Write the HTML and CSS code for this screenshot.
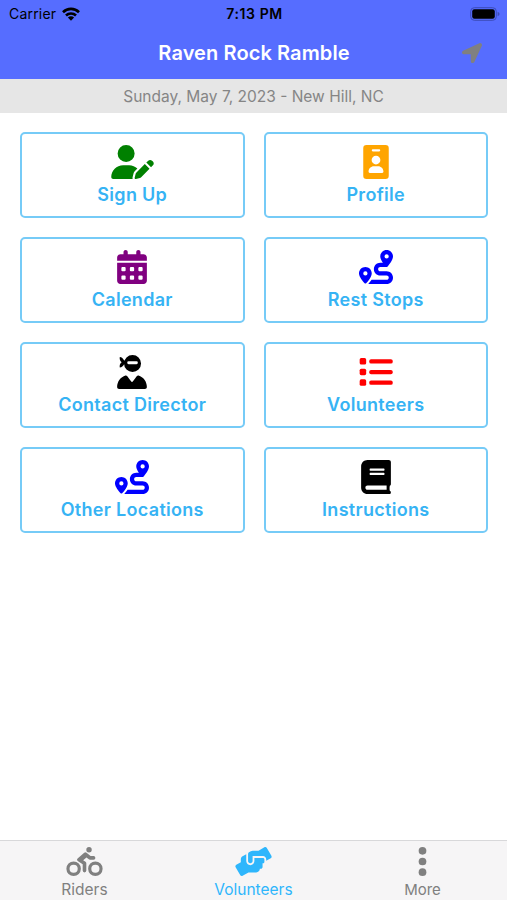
FILE: index.html
```html
<!DOCTYPE html>
<html lang="en">
<head>
<meta charset="utf-8">
<title>Raven Rock Ramble</title>
<link rel="stylesheet" href="styles.css">
</head>
<body>
<svg class="defs" aria-hidden="true">
  <symbol id="route" viewBox="0 0 512 512"><path fill-rule="evenodd" d="M512 96c0 50.2-59.1 125.1-84.6 155c-3.8 4.4-9.4 6.1-14.5 5H320c-17.7 0-32 14.3-32 32s14.3 32 32 32h96c53 0 96 43 96 96s-43 96-96 96H139.6c8.7-9.900 19.300-22.600 30-36.800c6.300-8.400 12.800-17.600 19-27.200H416c17.700 0 32-14.300 32-32s-14.300-32-32-32H320c-53 0-96-43-96-96s43-96 96-96h39.800c-21-31.500-39.800-67.700-39.800-96c0-53 43-96 96-96s96 43 96 96zM117.100 489.100c-3.800 4.300-7.200 8.100-10.100 11.300l-1.800 2-.2-.2c-6 4.600-14.600 4-20-1.800C59.800 473 0 402.500 0 352c0-53 43-96 96-96s96 43 96 96c0 30-21.100 67-43.500 97.900c-10.700 14.700-21.700 28-30.800 38.500zM128 352a32 32 0 1 0-64 0 32 32 0 1 0 64 0zM416 128a32 32 0 1 0 0-64 32 32 0 1 0 0 64z"/></symbol>
</svg>
<div class="app">
  <header class="top">
    <div class="status">
      <div class="carrier"><span>Carrier</span>
        <svg class="wifi" viewBox="0 0 18 14"><path fill="none" stroke="#000" stroke-width="2.6" d="M1 5.2a11.4 11.4 0 0 1 16 0M4 8.5a7.1 7.1 0 0 1 10 0"/><path d="M9 13.8 5.9 10.6a4.4 4.4 0 0 1 6.2 0z"/></svg>
      </div>
      <div class="time">7:13 PM</div>
      <svg class="battery" viewBox="0 0 30 14"><rect x=".7" y=".7" width="25.6" height="12.6" rx="3.6" fill="none" stroke="#3c4cb8" stroke-width="1"/><rect x="2.200" y="2.200" width="22.600" height="9.600" rx="2.200"/><path fill="#3c4cb8" d="M27.600 4.800q2 .8 2 2.200t-2 2.200z"/></svg>
    </div>
    <div class="nav">
      <h1>Raven Rock Ramble</h1>
      <svg class="locate" viewBox="0 0 512 512"><path d="M444.500 3.500 28.700 195.400c-48 22.400-32 92.700 19.200 92.700h175.900v175.900c0 51.200 70.300 67.200 92.700 19.200l191.900-415.800c16-38.400-25.600-79.900-63.900-63.900z"/></svg>
    </div>
  </header>
  <div class="subtitle">Sunday, May 7, 2023 - New Hill, NC</div>
  <main class="grid">
    <div class="card"><svg class="icon w640 green" viewBox="0 0 640 512"><path d="M224 256A128 128 0 1 0 224 0a128 128 0 1 0 0 256zm-45.700 48C79.800 304 0 383.800 0 482.300 0 498.700 13.300 512 29.700 512h293.100c-3.100-8.800-3.700-18.400-1.400-27.800l15-60.100c2.800-11.300 8.600-21.500 16.800-29.700l40.300-40.300c-32.100-31-75.700-50.100-123.900-50.100h-91.300zm435.500-68.300c-15.600-15.600-40.900-15.600-56.600 0l-29.400 29.400 71 71 29.400-29.400c15.600-15.600 15.600-40.900 0-56.600l-14.400-14.400zM375.900 417c-4.100 4.100-7 9.200-8.400 14.900l-15 60.100c-1.400 5.500.2 11.200 4.200 15.200s9.700 5.600 15.200 4.200l60.100-15c5.600-1.400 10.800-4.300 14.900-8.400l129.200-129.300-71-71L375.900 417z"/></svg><span>Sign Up</span></div>
    <div class="card"><svg class="icon w384 orange" viewBox="0 0 384 512"><path fill-rule="evenodd" d="M48 0h288q48 0 48 48v416q0 48-48 48H48q-48 0-48-48V48Q0 0 48 0zM144 64a16 16 0 0 0 0 32h96a16 16 0 0 0 0-32zM192 292a66 66 0 1 0 0-132 66 66 0 0 0 0 132zM160 320c-44 0-80 36-80 80 0 12 7 20 18 20h188c11 0 18-8 18-20 0-44-36-80-80-80z"/></svg><span>Profile</span></div>
    <div class="card"><svg class="icon w448 purple" viewBox="0 0 448 512"><path fill-rule="evenodd" d="M128 0c17.700 0 32 14.300 32 32v32h128V32c0-17.700 14.300-32 32-32s32 14.300 32 32v32h48c26.500 0 48 21.500 48 48v48H0v-48c0-26.500 21.500-48 48-48h48V32c0-17.700 14.300-32 32-32zM0 192h448v272c0 26.500-21.500 48-48 48H48c-26.500 0-48-21.500-48-48zM80 256q-16 0-16 16v32q0 16 16 16h32q16 0 16-16v-32q0-16-16-16zm128 0q-16 0-16 16v32q0 16 16 16h32q16 0 16-16v-32q0-16-16-16zm128 0q-16 0-16 16v32q0 16 16 16h32q16 0 16-16v-32q0-16-16-16zM80 384q-16 0-16 16v32q0 16 16 16h32q16 0 16-16v-32q0-16-16-16zm128 0q-16 0-16 16v32q0 16 16 16h32q16 0 16-16v-32q0-16-16-16zm128 0q-16 0-16 16v32q0 16 16 16h32q16 0 16-16v-32q0-16-16-16z"/></svg><span>Calendar</span></div>
    <div class="card"><svg class="icon w512 blue"><use href="#route"/></svg><span>Rest Stops</span></div>
    <div class="card"><svg class="icon w448" viewBox="0 0 448 512"><path d="M40 30c28 4 52 22 66 54h34v56h-34c-14 28-38 46-66 50-6-32 4-60 28-80-24-20-34-48-28-80z"/><path fill-rule="evenodd" d="M232 0a128 128 0 1 1 0 256 128 128 0 1 1 0-256zM172 94q-20 0-20 22t20 22h120q20 0 20-22t-20-22zM126 309c9-3 18 1 24 8l62 83c6 8 18 8 24 0l62-83c6-7 15-11 24-8C395 331 448 401 448 482c0 17-13 30-30 30H30c-17 0-30-13-30-30 0-81 53-151 126-173z"/></svg><span>Contact Director</span></div>
    <div class="card"><svg class="icon w512 red" viewBox="0 0 512 512"><rect x="10" y="46" width="98" height="98" rx="24"/><rect x="10" y="206" width="98" height="98" rx="24"/><rect x="10" y="366" width="98" height="98" rx="24"/><rect x="154" y="64" width="354" height="64" rx="28"/><rect x="154" y="224" width="354" height="64" rx="28"/><rect x="154" y="384" width="354" height="64" rx="28"/></svg><span>Volunteers</span></div>
    <div class="card"><svg class="icon w512 blue"><use href="#route"/></svg><span>Other Locations</span></div>
    <div class="card"><svg class="icon w448" viewBox="0 0 448 512"><path fill-rule="evenodd" d="M96 0C43 0 0 43 0 96v320c0 53 43 96 96 96h328c14 0 24-10 24-24 0-12-6-20-16-24-5-18-5-56 0-76 10-4 16-12 16-24V32c0-17.700-14.300-32-32-32zM96 384h288v64H96c-17.700 0-32-14.300-32-32s14.300-32 32-32zM138 128q-10 0-10 10v12q0 10 10 10h204q10 0 10-10v-12q0-10-10-10zm0 64q-10 0-10 10v12q0 10 10 10h204q10 0 10-10v-12q0-10-10-10z"/></svg><span>Instructions</span></div>
  </main>
  <nav class="tabs">
    <div class="tab"><svg viewBox="0 0 640 512"><path fill-rule="evenodd" d="M400 96a48 48 0 1 0-48-48 48 48 0 0 0 48 48zm-4 121a31.900 31.900 0 0 0 20 7h64a32 32 0 0 0 0-64h-52.780L356 103a31.940 31.940 0 0 0-40.810.68l-112 96a32 32 0 0 0 3.080 50.920L288 305.120V416a32 32 0 0 0 64 0V288a32 32 0 0 0-14.250-26.620l-41.360-27.570 58.250-49.920zM512 256a128 128 0 1 0 128 128 128 128 0 0 0-128-128zm0 200a72 72 0 1 1 72-72 72 72 0 0 1-72 72zM128 256a128 128 0 1 0 128 128 128 128 0 0 0-128-128zm0 200a72 72 0 1 1 72-72 72 72 0 0 1-72 72z"/></svg><span>Riders</span></div>
    <div class="tab active"><svg viewBox="0 0 640 512"><path d="M488 192H336v56c0 39.700-32.300 72-72 72s-72-32.300-72-72V126.400l-64.900 39C107.800 176.900 96 197.800 96 220.200v47.300l-80 46.200C.7 322.500-4.600 342.100 4.300 357.400l80 138.600c8.800 15.300 28.400 20.500 43.700 11.700L231.400 448H368c35.300 0 64-28.700 64-64h16c17.700 0 32-14.300 32-32v-64h8c13.300 0 24-10.700 24-24v-48c0-13.300-10.700-24-24-24zm147.700-37.400L555.700 16C546.900.7 527.300-4.500 512 4.300L408.600 64H306.400c-12 0-23.700 3.400-33.900 9.700L239 94.600c-9.400 5.800-15 16.100-15 27.100V248c0 22.100 17.900 40 40 40s40-17.900 40-40v-88h184c30.900 0 56 25.100 56 56v28.500l80-46.200c15.300-8.900 20.500-28.400 11.700-43.700z"/></svg><span>Volunteers</span></div>
    <div class="tab"><svg viewBox="0 0 640 512"><circle cx="320" cy="68" r="68"/><circle cx="320" cy="256" r="68"/><circle cx="320" cy="444" r="68"/></svg><span class="more">More</span></div>
  </nav>
</div>
</body>
</html>
```
FILE: styles.css
```css
* { box-sizing: border-box; }
body { margin: 0; font-family: Inter, "Liberation Sans", sans-serif; background: #fff; }
.defs { display: none; }
.app { height: 900px; display: flex; flex-direction: column; overflow: hidden; white-space: nowrap; }
.top { height: 79px; background: #566dff; }
.status { height: 27px; display: grid; grid-template-columns: 1fr auto 1fr; align-items: center; padding: 0 7px 0 9px; font-size: 14px; }
.carrier { display: flex; align-items: center; gap: 6px; }
.carrier span { letter-spacing: 0.2px; }
.wifi { width: 18px; height: 14px; }
.time { font-weight: 600; letter-spacing: 0.6px; }
.battery { width: 30px; height: 14px; justify-self: end; }
.nav { height: 52px; display: grid; grid-template-columns: 1fr auto 1fr; align-items: center; padding-right: 25px; padding-left: 26px; }
h1 { margin: 0; grid-column: 2; color: #fff; font-size: 20px; font-weight: 600; letter-spacing: 0.1px; }
.locate { width: 20px; height: 20px; justify-self: end; fill: #808080; }
.subtitle { height: 34px; line-height: 35px; background: #e6e6e6; color: #858585; text-align: center; font-size: 15.5px; }
.grid { flex: 1; display: grid; grid-template-columns: 1fr 1fr; grid-auto-rows: 86px; align-content: start; gap: 19px; padding: 19px 19px 0 20px; }
.card { border: 2px solid #76cbf7; border-radius: 5px; display: flex; flex-direction: column; align-items: center; padding-top: 11px; }
.card span { margin-top: 4px; line-height: 24px; font-size: 18px; font-weight: 600; letter-spacing: 0.3px; color: #36b3f4; }
.icon { height: 34px; flex: none; }
.w384 { width: 26px; }
.w448 { width: 30px; }
.w512 { width: 34px; }
.w640 { width: 43px; }
.green { fill: #008000; }
.orange { fill: #ffa500; }
.purple { fill: #800080; }
.blue { fill: #00f; }
.red { fill: #f00; }
.tabs { height: 60px; border-top: 1px solid #d8d8da; background: #f6f5f6; display: grid; grid-template-columns: repeat(3, 1fr); }
.tab { display: flex; flex-direction: column; align-items: center; padding-top: 6px; color: #808080; font-size: 15.5px; }
.tab svg { width: 37px; height: 29px; fill: currentColor; }
.tab span { line-height: 20px; margin-top: 4px; }
.tab .more { font-size: 15px; }
.active { color: #2eb6fc; }
```
